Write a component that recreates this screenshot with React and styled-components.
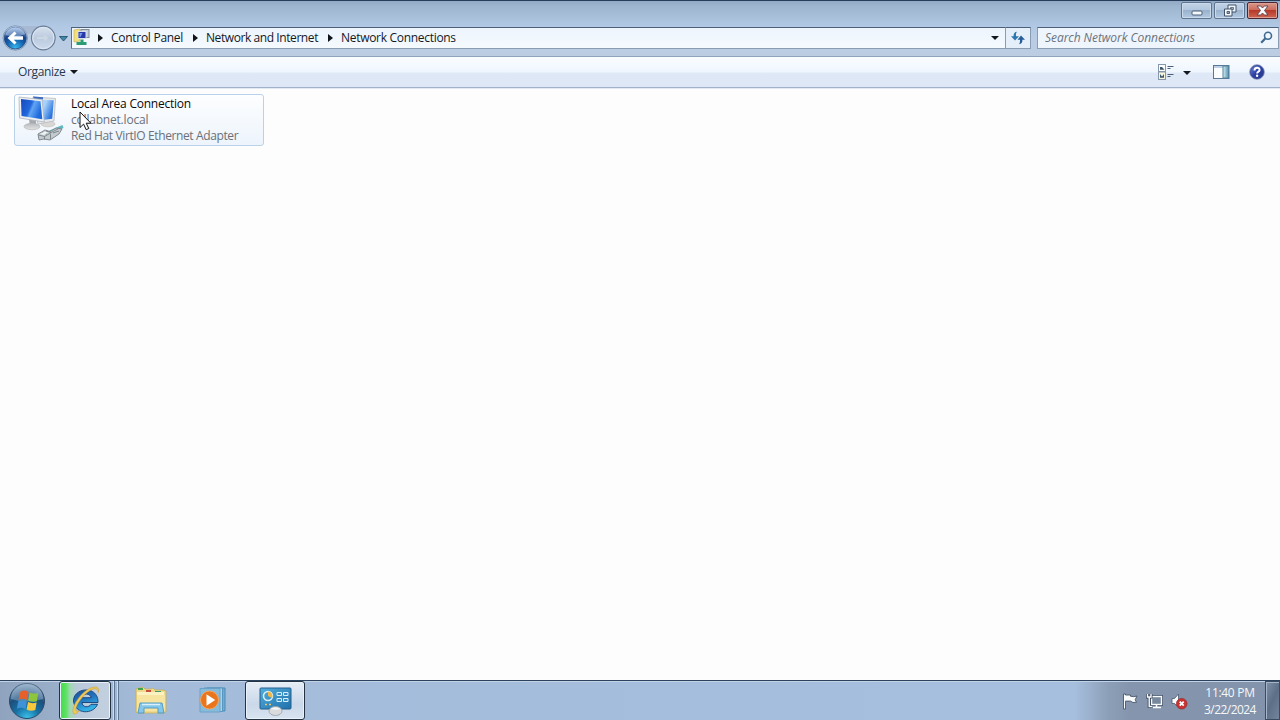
import React from 'react';
import styled, { createGlobalStyle } from 'styled-components';

const GlobalStyle = createGlobalStyle`
  * {
    box-sizing: border-box;
  }

  body {
    margin: 0;
    overflow: hidden;
    font-family: 'Open Sans', 'Noto Sans', sans-serif;
    font-size: 12px;
    color: #14181f;
  }

  svg {
    display: block;
    flex: none;
  }
`;

const Desktop = styled.div`
  display: flex;
  flex-direction: column;
  width: 1280px;
  height: 720px;
  background: #fdfdfd;
`;

const Text = styled.span`
  white-space: nowrap;
  letter-spacing: ${(p) => p.$spacing || 0}px;
`;

/* ---------- window frame ---------- */

const Frame = styled.header`
  flex: none;
  height: 56px;
  border-top: 1px solid #273d59;
  background: linear-gradient(#91a9c4 0, #9fb6d0 6px, #b1c8e4 25px, #b9cce4 38px, #bccde2 55px);
`;

const TitleBar = styled.div`
  display: flex;
  justify-content: flex-end;
  gap: 2px;
  height: 26px;
  padding: 1px 2px 0 0;
`;

const CaptionButton = styled.div`
  display: flex;
  align-items: center;
  justify-content: center;
  width: 31px;
  height: 17px;
  border: 1px solid ${(p) => (p.$close ? '#4b2630' : '#5f758f')};
  border-radius: 2px;
  box-shadow: inset 0 0 0 1px ${(p) => (p.$close ? '#dba197' : '#cadaea')};
  background: ${(p) =>
    p.$close
      ? 'linear-gradient(#d9988c 0, #cc6c5c 45%, #b7392a 50%, #cf6650 100%)'
      : 'linear-gradient(#c0d2e6 0, #b3c7df 45%, #9bb2cc 50%, #b3cae5 100%)'};
`;

const NavBar = styled.div`
  display: flex;
  height: 22px;
  padding: 0 1px 0 2px;
`;

const NavButtons = styled.div`
  width: 69px;
  height: 28px;
  margin-top: -3px;
`;

const AddressBar = styled.div`
  display: flex;
  align-items: center;
  width: 935px;
  border: 1px solid #8a9cb3;
  border-top-color: #4c6078;
  border-left-color: #5b6f88;
  background: linear-gradient(#edf4fc, #f4fafe);
  padding: 0 6px 1px 0;
`;

const Crumb = styled.div`
  flex: none;
  display: flex;
  align-items: center;
  width: ${(p) => p.$width}px;
`;

const CrumbArrow = styled.div`
  width: 0;
  height: 0;
  margin: 1px 8px 0 7px;
  border-left: 5px solid #10131a;
  border-top: 4px solid transparent;
  border-bottom: 4px solid transparent;
`;

const DownArrow = styled.div`
  width: 0;
  height: 0;
  margin: 1px ${(p) => p.$right || 0}px 0 ${(p) => p.$left || 0}px;
  border-top: 4px solid #14181f;
  border-left: 4px solid transparent;
  border-right: 4px solid transparent;
`;

const Spacer = styled.div`
  flex: 1;
`;

const RefreshButton = styled.div`
  display: flex;
  align-items: center;
  justify-content: center;
  width: 25px;
  border: 1px solid #8a9cb3;
  border-top-color: #4c6078;
  border-left: none;
  background: #e5effa;
`;

const SearchBox = styled.div`
  display: flex;
  align-items: center;
  justify-content: space-between;
  width: 242px;
  margin-left: 6px;
  padding: 0 5px 1px 7px;
  border: 1px solid #8a9cb3;
  border-top-color: #4c6078;
  background: #eff5fc;
  color: #6b737e;
  font-style: italic;
`;

/* ---------- command bar ---------- */

const CommandBar = styled.div`
  flex: none;
  display: flex;
  align-items: center;
  height: 32px;
  padding: 0 15px 0 18px;
  border-top: 1px solid #8fa3bc;
  border-bottom: 1px solid #a2b1ca;
  background: linear-gradient(#fafdff 0, #eff6fe 15px, #dfe8f6 16px, #dde7f5 100%);
  box-shadow: 0 1px 0 #e4eaf4;
  color: #27384f;
`;

const Organize = styled.div`
  display: flex;
  align-items: center;
  padding-bottom: 1px;
`;

const CommandIcons = styled.div`
  display: flex;
  align-items: center;
  margin-left: auto;
`;

const HelpButton = styled.div`
  margin-left: 19px;
`;

/* ---------- content ---------- */

const Content = styled.main`
  flex: 1;
  padding: 6px 14px;
`;

const Connection = styled.div`
  position: relative;
  display: flex;
  width: 250px;
  height: 52px;
  border: 1px solid #b9d2ea;
  border-radius: 3px;
  background: linear-gradient(#fdfeff, #edf4fc);
`;

const ConnectionText = styled.div`
  display: flex;
  flex-direction: column;
  margin-left: 4px;
  padding-top: 1px;
  line-height: 16px;
  color: #6b7078;
`;

const ConnectionName = styled(Text)`
  color: #08090b;
`;

const Pointer = styled.svg`
  position: absolute;
  left: 64px;
  top: 16px;
`;

/* ---------- taskbar ---------- */

const Taskbar = styled.footer`
  flex: none;
  display: flex;
  height: 40px;
  border-top: 1px solid #2b435f;
  box-shadow: inset 0 1px 0 #c3d2e4;
  background: linear-gradient(
    90deg,
    #8fa3bf 0,
    #9aafca 60px,
    #a4bcda 150px,
    #a6bfde 1075px,
    #8d9fb8 1108px,
    #8495ad 1130px,
    #8293ab 1280px
  );
`;

const StartArea = styled.div`
  width: 59px;
  padding: 1px 0 0 8px;
`;

const TaskButton = styled.div`
  display: flex;
  justify-content: center;
  width: ${(p) => p.$width}px;
  padding-top: ${(p) => p.$top || 0}px;
  border: 1px solid #253242;
  border-radius: 3px;
  box-shadow: inset 0 0 0 1px #e9f1fa;
  background: ${(p) =>
    p.$progress
      ? 'linear-gradient(90deg, #3fdc46 0, #5de064 6px, #a0d9b0 10px, #b9c9da 17px, #c3d0e0 100%)'
      : 'linear-gradient(#e6edf6, #cad8e9 60%, #d8e3f0)'};
`;

const StackEdge = styled.div`
  width: 4px;
  border-right: 1px solid #60758f;
  box-shadow: inset -1px 0 0 #cfdceb;
`;

const PinnedIcon = styled.div`
  width: ${(p) => p.$width}px;
  padding: ${(p) => p.$top || 5}px 0 0 ${(p) => p.$left}px;
`;

const Tray = styled.div`
  display: flex;
  align-items: center;
  gap: 8px;
  margin-left: auto;
  padding-top: 1px;
`;

const Clock = styled.div`
  display: flex;
  flex-direction: column;
  align-items: center;
  width: 70px;
  margin-left: -1px;
  padding-bottom: 1px;
  line-height: 17px;
  color: #f5f8fb;
`;

const ShowDesktop = styled.div`
  width: 15px;
  border: 1px solid #3b4c61;
  box-shadow: inset 1px 1px 0 #a5b4c7;
  background: linear-gradient(115deg, #8092a8 0, #5c6f87 50%, #73859c 100%);
`;

/* ---------- icons ---------- */

const BackForward = () => (
  <svg width="69" height="28" viewBox="2 24 69 28">
    <defs>
      <radialGradient id="back" cx="0.5" cy="0.95" r="0.9">
        <stop offset="0" stopColor="#39b9ee" />
        <stop offset="0.45" stopColor="#1461ae" />
        <stop offset="0.7" stopColor="#12428c" />
        <stop offset="1" stopColor="#9dbce0" />
      </radialGradient>
      <linearGradient id="fwd" x2="0" y2="1">
        <stop offset="0" stopColor="#d8e2ef" />
        <stop offset="0.5" stopColor="#bccade" />
        <stop offset="1" stopColor="#ccdbed" />
      </linearGradient>
    </defs>
    <path d="M14 26h30v5q-15 5-30 0z" fill="#a8b9d3" />
    <circle cx="15.3" cy="38" r="12.2" fill="#c7d7ea" stroke="#6e88aa" strokeWidth="0.8" />
    <circle cx="15.3" cy="38" r="11" fill="url(#back)" stroke="#26477d" strokeWidth="0.8" />
    <path d="M5.5 34a10 10 0 0 1 19.6 0q-9 5-19.6 1z" fill="#bed2ed" opacity="0.5" />
    <path d="M7.5 38l7-6.500 2 2-2.700 2.800h9.200v3.400h-9.200l2.700 2.800-2 2z" fill="#fff" />
    <circle cx="43.3" cy="38" r="11.8" fill="url(#fwd)" stroke="#697d99" strokeWidth="1.2" />
    <circle cx="43.3" cy="38" r="10.6" fill="none" stroke="#dfe8f3" />
    <path d="M37 37h7v-2.500l4.500 3.500-4.500 3.500v-2.500h-7z" fill="#ccd7e4" />
    <path d="M59.5 36.500h8l-4 4.500z" fill="#3f89aa" stroke="#275570" strokeWidth="0.9" />
  </svg>
);

const NetworkFolder = () => (
  <svg width="19" height="19" viewBox="0 0 19 19">
    <path d="M2 2l6-1v12l-6 1z" fill="#f3e079" stroke="#c9b65d" strokeWidth="0.7" />
    <rect x="9" y="1.5" width="8" height="8" fill="#c5cfdb" stroke="#7e8b9b" />
    <rect x="6" y="3.5" width="8" height="7" fill="#2938a9" stroke="#d8dfe8" />
    <path d="M7.5 5h3l-2 4h-1z" fill="#7198e8" />
    <path d="M8.5 11.500h3v2.500h3v3h-10v-3h4z" fill="#2c9d72" />
  </svg>
);

const Refresh = () => (
  <svg width="16" height="14" viewBox="0 0 16 14">
    <path d="M7 .8C4.5 1 3.500 2.500 3.600 5.200H1L5 9.500l4-4.300H6C5.900 3.300 6 2 7 .8z" fill="#2e77ae" />
    <path d="M9 13.200c2.500-.2 3.500-1.700 3.400-4.400H15L11 4.500 7.500 8.800H10c.1 1.900 0 3.200-1 4.400z" fill="#275e9a" />
  </svg>
);

const Magnifier = () => (
  <svg width="13" height="13" viewBox="0 0 13 13" fill="none" stroke="#3e6a91">
    <circle cx="8" cy="4.7" r="3.5" strokeWidth="1.6" />
    <path d="M5.5 7.300L1.200 11.700" strokeWidth="2.2" />
  </svg>
);

const ViewMode = () => (
  <svg width="17" height="16" viewBox="0 0 17 16">
    <rect x=".5" y=".5" width="7" height="7" fill="#fbfcfd" stroke="#8796a8" />
    <rect x=".5" y="8" width="7" height="7.5" fill="#f6f6df" stroke="#8796a8" />
    <path d="M2 3h2l2.500 2.800H2zM2 10l2 2.500 2-2.500v3.800H2z" fill="#3c566b" />
    <path d="M9.500 2.500h6M9.500 4.500h3M9.500 10.500h6M9.500 12.500h3" stroke="#4d6078" />
  </svg>
);

const PreviewPane = () => (
  <svg width="17" height="14" viewBox="0 0 17 14">
    <defs>
      <linearGradient id="pane" x2="1">
        <stop offset="0" stopColor="#d7edf2" />
        <stop offset="1" stopColor="#5198b5" />
      </linearGradient>
    </defs>
    <rect x=".5" y=".5" width="15.5" height="13" fill="#fcfdfe" stroke="#5a7797" />
    <path d="M1 2h9.500" stroke="#bed1e5" strokeWidth="2" />
    <rect x="10" y="1" width="5.5" height="12" fill="url(#pane)" stroke="#54829c" />
  </svg>
);

const Help = () => (
  <svg width="16" height="16" viewBox="0 0 16 16">
    <defs>
      <linearGradient id="help" x2="1" y2="1">
        <stop offset="0" stopColor="#7c93df" />
        <stop offset="0.5" stopColor="#2a3fa5" />
        <stop offset="1" stopColor="#263785" />
      </linearGradient>
    </defs>
    <circle cx="8" cy="8" r="7.3" fill="url(#help)" stroke="#8f9bc2" />
    <circle cx="8" cy="8" r="6.5" fill="none" stroke="#36478f" strokeWidth="0.7" />
    <path d="M5.500 6.400c0-3.500 5.300-3.400 5.100-.3-.1 1.500-2.500 1.600-2.500 3.400" fill="none" stroke="#fff" strokeWidth="1.9" />
    <circle cx="8.1" cy="11.8" r="1.2" fill="#fff" />
  </svg>
);

const LanIcon = () => (
  <svg width="52" height="50" viewBox="15 95 52 50">
    <defs>
      <linearGradient id="screen" x2="1" y2="0.4">
        <stop offset="0" stopColor="#1549bd" />
        <stop offset="0.5" stopColor="#2268dc" />
        <stop offset="0.62" stopColor="#62a5f3" />
        <stop offset="1" stopColor="#1e69dc" />
      </linearGradient>
      <linearGradient id="screenBack" x2="1" y2="0.5">
        <stop offset="0.5" stopColor="#a9d2fb" />
        <stop offset="1" stopColor="#2873dd" />
      </linearGradient>
      <linearGradient id="base" x2="0" y2="1">
        <stop offset="0" stopColor="#b5b9be" />
        <stop offset="1" stopColor="#e4e4e3" />
      </linearGradient>
    </defs>
    <ellipse cx="48" cy="124" rx="7" ry="2.8" fill="#dad8d4" stroke="#bcbab5" strokeWidth="0.6" />
    <path d="M33 97l22.500 1.500-1.500 22.500L38 124z" fill="#e6e9ec" stroke="#b4bac1" strokeWidth="0.8" />
    <path d="M33 96.500l10 .7v2.300l-9-.5z" fill="#3d68bd" />
    <path d="M36 99.500l17.700.8-1.500 18.500-12 1.500z" fill="url(#screenBack)" />
    <path d="M29 119l7 1v7h-6z" fill="#a6aab0" />
    <ellipse cx="32" cy="126.5" rx="8" ry="3.2" fill="url(#base)" stroke="#b1b1af" strokeWidth="0.6" />
    <path d="M19 97l23 2.500 2.300 22.500L19.500 118z" fill="#edf0f2" stroke="#aeb4bc" strokeWidth="0.8" />
    <path d="M21 99l19.500 2.200 1.800 18L21.500 116z" fill="url(#screen)" />
    <path d="M50 132l7-3 6-2.500" fill="none" stroke="#61b9bf" strokeWidth="3" />
    <path d="M38 134l7-4 5 1.500 6-3.500 6 1-3 5-9 6-6-1-5 1z" fill="#c3cbcf" stroke="#788188" strokeWidth="0.9" />
    <path d="M38.500 135l6 1.500 6-3.500M44.500 136.500v3M46 131l5 1.500M50 133l8-4M50.500 134v5M53 133l6-2M42 133l5 1" fill="none" stroke="#6e787e" strokeWidth="0.8" />
    <path d="M40 134l5-2.500 3 1-4 2.500z" fill="#eef2f3" />
  </svg>
);

const StartOrb = () => (
  <svg width="38" height="38" viewBox="-19 -19 38 38">
    <defs>
      <radialGradient id="orb" cx="0.5" cy="1" r="1">
        <stop offset="0" stopColor="#3ec6ee" />
        <stop offset="0.35" stopColor="#1673a6" />
        <stop offset="0.65" stopColor="#1d4f7c" />
        <stop offset="1" stopColor="#8ca9c5" />
      </radialGradient>
    </defs>
    <circle r="17.5" fill="url(#orb)" stroke="#2b4865" strokeWidth="1" />
    <path d="M-16-2a16 16 0 0 1 32 0q-16 5-32 0z" fill="#c5d8e7" opacity="0.35" />
    <path d="M-6.500-9.500q4.500-2 8 .5l-1.300 8q-4-2.200-8.700-.5z" fill="#e5602a" />
    <path d="M2.600-8.500q4 2 8.700.4L9.800.2Q5.500 1.800 1.200-.5z" fill="#8dc53d" />
    <path d="M-8.800.2q4.600-1.700 8.700.3l-1.300 7.500q-4-2.200-8.700-.3z" fill="#3e92d5" />
    <path d="M1 1.100q4 2 8.600.4L8.300 9q-4.500 1.700-8.700-.5z" fill="#fac83b" />
  </svg>
);

const InternetExplorer = () => (
  <svg width="32" height="32" viewBox="0 0 32 32">
    <defs>
      <linearGradient id="ie" x2="0.4" y2="1">
        <stop offset="0" stopColor="#1a4f98" />
        <stop offset="0.5" stopColor="#2172bd" />
        <stop offset="1" stopColor="#35b4e9" />
      </linearGradient>
    </defs>
    <path d="M29 18.500H13c.2 5 7 5.500 9 1.800h6.500C24.500 30.500 6 31 4.500 17 4.500 3 29.500 1 29 18.500zM12.800 13.700h9.300c-.5-4.800-8.600-4.800-9.300 0z" fill="url(#ie)" stroke="#123f76" strokeWidth="0.9" />
    <path d="M29.500 8.500c1-5.500-2.500-7-9-4C10.500 9.500 1.500 24.500 4.500 29.500c1.500 1.500 4-.5 6-3-3 1.500-4.300.5-3.500-2.500C9 17 17.500 7.500 23.500 5.200c3.500-1.300 5 .3 6 3.300z" fill="#f0ca55" stroke="#c5972e" strokeWidth="0.5" />
  </svg>
);

const Explorer = () => (
  <svg width="32" height="29" viewBox="0 0 32 29">
    <path d="M1 3l7-2 2 2h6l2-1 2 2h8l3 1v21l-2 1H2L1 26z" fill="#efd98a" stroke="#c8ad5e" strokeWidth="0.8" />
    <path d="M3 2h5v2H3z" fill="#43a34a" />
    <path d="M11 4h5v2h-5z" fill="#cb4d3c" />
    <path d="M20 5h6v2h-6z" fill="#3f9f68" />
    <path d="M2 6h27v3H2z" fill="#fbf2c3" />
    <path d="M2 9h28v16H2z" fill="#f6e4a0" />
    <path d="M5 17h22l2 10h-6v-5H9v5H3z" fill="#84c7ea" stroke="#4b97c3" strokeWidth="0.9" />
    <path d="M7 18.500h18" stroke="#d7f0fa" strokeWidth="1.5" />
  </svg>
);

const MediaPlayer = () => (
  <svg width="28" height="26" viewBox="0 0 28 26">
    <path d="M8 1h18v23H8z" fill="#72add1" stroke="#4b8bb5" />
    <path d="M5 1h18.500v23.500H5z" fill="#a9d2e9" stroke="#5797bf" />
    <path d="M1 1.500h20v23.500H1z" fill="#87bbdb" stroke="#6aa2c7" />
    <circle cx="10.5" cy="13" r="9" fill="#e9751d" stroke="#f4a55b" />
    <path d="M7.5 7.300l8.700 5.700-8.700 5.700z" fill="#fff" />
  </svg>
);

const ControlPanelIcon = () => (
  <svg width="33" height="29" viewBox="0 0 33 29">
    <defs>
      <linearGradient id="panel" x2="1" y2="1">
        <stop offset="0" stopColor="#52afdc" />
        <stop offset="1" stopColor="#1f70ab" />
      </linearGradient>
    </defs>
    <rect x="1" y="1" width="31" height="21" rx="1" fill="url(#panel)" stroke="#265f8d" />
    <circle cx="9" cy="9" r="4.5" fill="none" stroke="#dbeff9" strokeWidth="1.5" />
    <path d="M9 9V4.500a4.500 4.500 0 0 1 4 6.500z" fill="#f0b746" />
    <path d="M18 5.500h4.500v3H18zM24.500 5.500H29v3h-4.500zM18 11.500h4.500v3H18zM24.500 11.500H29v3h-4.500z" fill="#3c8fc4" stroke="#d4eefa" />
    <path d="M6 17.500h2M10 17.500h2" stroke="#f0c468" strokeWidth="1.5" />
    <ellipse cx="16.5" cy="24" rx="6.5" ry="4.5" fill="#d9dbdc" stroke="#999fa5" strokeWidth="0.8" />
    <path d="M11.500 22q5-3.500 10 0-5 1.500-10 0z" fill="#f5f6f6" />
  </svg>
);

const ActionFlag = () => (
  <svg width="16" height="17" viewBox="0 0 16 17">
    <path d="M1.500 1h2v1h5v1.200q3 1 6.500-.2l-1.800 3.700 1.300 2.600q-4 1-6-1.200h-5V16h-2z" fill="#f9fbfc" stroke="#46566b" strokeWidth="0.9" />
  </svg>
);

const NetworkTray = () => (
  <svg width="17" height="17" viewBox="0 0 17 17">
    <rect x="5.5" y="3.5" width="10" height="8" fill="#8b9bb0" stroke="#39485b" strokeWidth="2.8" />
    <rect x="5.5" y="3.5" width="10" height="8" fill="#78899e" stroke="#f9fbfc" strokeWidth="1.4" />
    <path d="M7 14.500h8M10.500 12v2" stroke="#f9fbfc" strokeWidth="1.5" />
    <path d="M1.500 1v3h3.500V1M3.200 4v9.500h3" fill="none" stroke="#39485b" strokeWidth="3" />
    <path d="M1.500 1v3h3.500V1M3.200 4v9.500h3" fill="none" stroke="#f9fbfc" strokeWidth="1.4" />
  </svg>
);

const MutedSpeaker = () => (
  <svg width="17" height="17" viewBox="0 0 17 17">
    <path d="M1 5.500h2.500L7.500 1v13.500L3.500 10.500H1z" fill="#f9fbfc" stroke="#4a596c" strokeWidth="0.8" />
    <circle cx="10.700" cy="10.700" r="5.300" fill="#cb3131" stroke="#973133" strokeWidth="0.8" />
    <path d="M8.700 8.700l4 4M12.700 8.700l-4 4" stroke="#fff" strokeWidth="1.8" />
  </svg>
);

const App = () => {
  return (
    <Desktop>
      <GlobalStyle />
      <Frame>
        <TitleBar>
          <CaptionButton>
            <svg width="12" height="15" viewBox="0 0 12 15">
              <rect x="1" y="8" width="10" height="4" rx="1" fill="#f5f8fb" stroke="#4c5e76" />
            </svg>
          </CaptionButton>
          <CaptionButton>
            <svg width="14" height="13" viewBox="0 0 14 13">
              <path d="M5 1h8v7H5z" fill="#f0f5fa" stroke="#43546a" />
              <path d="M7.500 3.500h3v2h-3z" fill="#99acc4" stroke="#43546a" strokeWidth="0.7" />
              <path d="M1.500 5h7.500v7H1.500z" fill="#f5f8fb" stroke="#43546a" />
              <path d="M4 7.500h2.500v2H4z" fill="#99acc4" stroke="#43546a" strokeWidth="0.9" />
            </svg>
          </CaptionButton>
          <CaptionButton $close>
            <svg width="13" height="11" viewBox="0 0 13 11">
              <path d="M1 1h3.700l1.800 2 1.800-2H12L8.500 5.500 12 10H8.300L6.500 8l-1.800 2H1l3.500-4.500z" fill="#f8f9fa" stroke="#5f424c" strokeWidth="0.9" />
            </svg>
          </CaptionButton>
        </TitleBar>
        <NavBar>
          <NavButtons>
            <BackForward />
          </NavButtons>
          <AddressBar>
            <NetworkFolder />
            <Crumb $width={95}>
              <CrumbArrow />
              <Text $spacing={-0.28}>Control Panel</Text>
            </Crumb>
            <Crumb $width={135}>
              <CrumbArrow />
              <Text $spacing={-0.42}>Network and Internet</Text>
            </Crumb>
            <Crumb $width={140}>
              <CrumbArrow />
              <Text $spacing={-0.3}>Network Connections</Text>
            </Crumb>
            <Spacer />
            <DownArrow />
          </AddressBar>
          <RefreshButton>
            <Refresh />
          </RefreshButton>
          <SearchBox>
            <Text $spacing={-0.06}>Search Network Connections</Text>
            <Magnifier />
          </SearchBox>
        </NavBar>
      </Frame>

      <CommandBar>
        <Organize>
          <Text $spacing={-0.35}>Organize</Text>
          <DownArrow $left={5} />
        </Organize>
        <CommandIcons>
          <ViewMode />
          <DownArrow $left={8} $right={22} />
          <PreviewPane />
          <HelpButton>
            <Help />
          </HelpButton>
        </CommandIcons>
      </CommandBar>

      <Content>
        <Connection>
          <LanIcon />
          <ConnectionText>
            <ConnectionName $spacing={-0.24}>Local Area Connection</ConnectionName>
            <Text $spacing={-0.2}>collabnet.local</Text>
            <Text $spacing={-0.38}>Red Hat VirtIO Ethernet Adapter</Text>
          </ConnectionText>
          <Pointer width="13" height="20" viewBox="0 0 13 20">
            <path d="M1 1v15.500l3.600-3.400 2.600 5.600 2.600-1.200-2.600-5.300h4.700z" fill="#fff" stroke="#111" />
          </Pointer>
        </Connection>
      </Content>

      <Taskbar>
        <StartArea>
          <StartOrb />
        </StartArea>
        <TaskButton $width={52} $top={2} $progress>
          <InternetExplorer />
        </TaskButton>
        <StackEdge />
        <StackEdge />
        <PinnedIcon $width={64} $left={16}>
          <Explorer />
        </PinnedIcon>
        <PinnedIcon $width={62} $left={16} $top={6}>
          <MediaPlayer />
        </PinnedIcon>
        <TaskButton $width={60} $top={5}>
          <ControlPanelIcon />
        </TaskButton>
        <Tray>
          <ActionFlag />
          <NetworkTray />
          <MutedSpeaker />
          <Clock>
            <Text $spacing={-0.3}>11:40 PM</Text>
            <Text $spacing={-0.55}>3/22/2024</Text>
          </Clock>
        </Tray>
        <ShowDesktop />
      </Taskbar>
    </Desktop>
  );
};

export default App;
